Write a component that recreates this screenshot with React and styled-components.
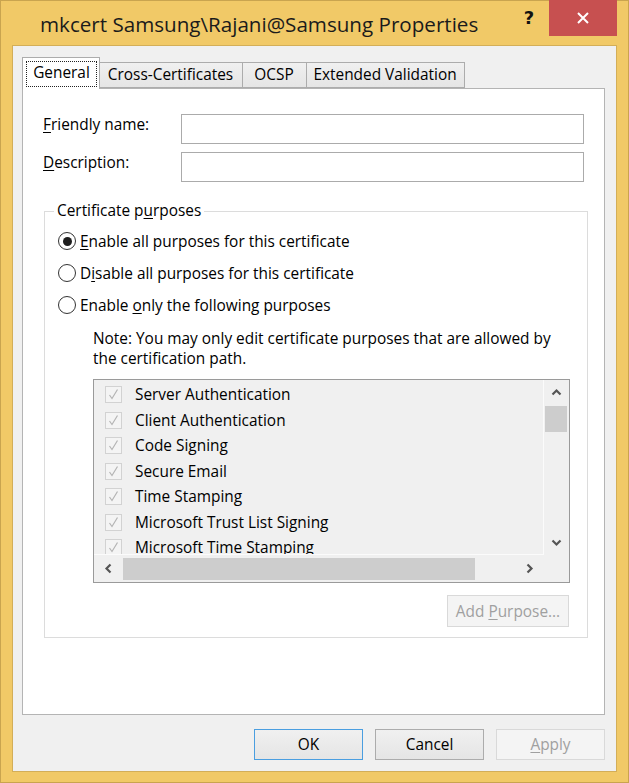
import React from "react";
import styled, { createGlobalStyle } from "styled-components";

const GlobalStyle = createGlobalStyle`
  html, body {
    margin: 0;
    padding: 0;
    background: #f1c967;
  }
  body {
    font-family: "Open Sans", "Noto Sans", sans-serif;
    font-size: 15.4px;
    color: #000;
  }
  * {
    box-sizing: border-box;
  }
`;

const Window = styled.div`
  width: 629px;
  height: 783px;
  display: flex;
  flex-direction: column;
  background: #f1c967;
  border: 1px solid #c9a44f;
`;

const TitleBar = styled.div`
  height: 44px;
  display: flex;
  align-items: flex-start;
`;

const Title = styled.div`
  flex: 1;
  padding: 9px 0 0 39px;
  font-size: 20.6px;
  line-height: 28px;
  color: #1b1b1b;
  white-space: nowrap;
`;

const HelpButton = styled.div`
  width: 32px;
  height: 32px;
  margin-right: 4px;
  display: flex;
  align-items: center;
  justify-content: center;
  font-family: "DejaVu Sans", sans-serif;
  font-weight: 700;
  font-size: 18px;
  color: #111;
`;

const CloseButton = styled.div`
  width: 68px;
  height: 36px;
  margin: -1px 11px 0 0;
  background: #c75050;
  display: flex;
  align-items: center;
  justify-content: center;
`;

const Client = styled.div`
  flex: 1;
  margin: 0 11px 10px 11px;
  background: #f0f0f0;
  border: 1px solid #d3ae58;
  display: flex;
  flex-direction: column;
  padding: 11px 11px 11px 9px;
`;

const TabStrip = styled.div`
  height: 31px;
  display: flex;
  align-items: flex-end;
`;

const Tab = styled.div`
  position: relative;
  width: ${(p) => p.$width}px;
  height: ${(p) => (p.$active ? "32px" : "26px")};
  margin-bottom: ${(p) => (p.$active ? "-1px" : "0")};
  margin-left: ${(p) => (p.$first ? "0" : "-1px")};
  z-index: ${(p) => (p.$active ? 1 : 0)};
  padding: ${(p) => (p.$active ? "3px 2px 0 3px" : "0 1px 0 0")};
  background: ${(p) => (p.$active ? "#fff" : "linear-gradient(#f0f0f0, #e5e5e5)")};
  border: 1px solid #acacac;
  border-bottom: ${(p) => (p.$active ? "none" : "1px solid #acacac")};
  display: flex;
  align-items: ${(p) => (p.$active ? "flex-start" : "center")};
  justify-content: center;
  white-space: nowrap;
  line-height: 22px;
`;

const FocusLabel = styled.span`
  flex: 1;
  text-align: center;
  padding-bottom: 2px;
  border: 1px dotted #222;
`;

const Panel = styled.div`
  flex: 1;
  background: #fff;
  border: 1px solid #b4b4b4;
  padding: 25px 16px 0 21px;
  display: flex;
  flex-direction: column;
`;

const FieldGrid = styled.div`
  display: grid;
  grid-template-columns: 138px 1fr;
  grid-auto-rows: 30px;
  row-gap: 8px;
  margin: 0 4px 0 -1px;
`;

const FieldLabel = styled.label`
  line-height: 22px;
  align-self: start;
`;

const TextBox = styled.div`
  border: 1px solid #ababab;
  background: #fff;
`;

const AccessKey = styled.u`
  text-decoration-thickness: 1px;
  text-underline-offset: 2px;
`;

const Group = styled.fieldset`
  margin: 19px 0 0 0;
  padding: 4px 17px 10px 12px;
  border: 1px solid #dcdcdc;
  min-width: 0;
  display: flex;
  flex-direction: column;
`;

const Legend = styled.legend`
  padding: 0 3px;
  margin-left: -3px;
  line-height: 20px;
`;

const RadioRow = styled.div`
  height: 32px;
  display: flex;
  align-items: center;
  gap: 4px;
`;

const RadioCircle = styled.span`
  width: 18px;
  height: 18px;
  margin-left: 1px;
  border-radius: 50%;
  border: 1px solid #333;
  background: #fff;
  display: flex;
  align-items: center;
  justify-content: center;
  &::after {
    content: "";
    width: 9px;
    height: 9px;
    border-radius: 50%;
    background: #1e1e1e;
    display: ${(p) => (p.$checked ? "block" : "none")};
  }
`;

const Note = styled.div`
  margin: 8px 0 0 36px;
  line-height: 20px;
`;

const ListFrame = styled.div`
  margin: 10px 0 0 36px;
  height: 204px;
  border: 1px solid #9a9a9a;
  background: #f0f0f0;
  display: grid;
  grid-template-columns: 1fr 25px;
  grid-template-rows: 1fr 27px;
`;

const ListItems = styled.div`
  overflow: hidden;
  padding: 2px 0 0 11px;
  border-right: 1px solid #fbfbfb;
  border-bottom: 1px solid #fbfbfb;
`;

const ListItem = styled.div`
  height: 25.5px;
  display: flex;
  align-items: center;
  gap: 13px;
  white-space: nowrap;
`;

const CheckBox = styled.span`
  width: 17px;
  height: 17px;
  flex: none;
  border: 1px solid #d2d2d2;
  background: #f4f4f4;
  display: flex;
  align-items: center;
  justify-content: center;
`;

const VScroll = styled.div`
  display: flex;
  flex-direction: column;
`;

const HScroll = styled.div`
  display: flex;
`;

const ScrollArrow = styled.div`
  flex: none;
  width: ${(p) => (p.$horizontal ? "29px" : "auto")};
  height: ${(p) => (p.$horizontal ? "auto" : "25px")};
  display: flex;
  align-items: center;
  justify-content: center;
`;

const Thumb = styled.div`
  background: #cdcdcd;
  margin: ${(p) => (p.$horizontal ? "3px 0 2px 0" : "1px 2px 0 1px")};
  width: ${(p) => (p.$horizontal ? "352px" : "auto")};
  height: ${(p) => (p.$horizontal ? "auto" : "26px")};
`;

const Spacer = styled.div`
  flex: 1;
`;

const Corner = styled.div`
  background: #f0f0f0;
`;

const Button = styled.div`
  width: ${(p) => p.$width || "109px"};
  height: ${(p) => p.$height || "31px"};
  display: flex;
  align-items: center;
  justify-content: center;
  border: 1px solid
    ${(p) => (p.$disabled ? "#d9d9d9" : p.$default ? "#4a9ee0" : "#acacac")};
  background: ${(p) =>
    p.$disabled ? "#f4f4f4" : "linear-gradient(#f0f0f0, #e5e5e5)"};
  color: ${(p) => (p.$disabled ? "#a0a0a0" : "#000")};
  white-space: nowrap;
`;

const AddButton = styled(Button)`
  align-self: flex-end;
  margin: 12px 1px 0 0;
`;

const ButtonRow = styled.div`
  margin-top: 14px;
  display: flex;
  justify-content: flex-end;
  gap: 12px;
`;

const rotations = { up: 0, right: 90, down: 180, left: 270 };

function Chevron({ dir }) {
  return (
    <svg
      width="11"
      height="11"
      viewBox="0 0 11 11"
      style={{ transform: `rotate(${rotations[dir]}deg)` }}
    >
      <path
        d="M1.5 7.5 L5.5 3.5 L9.5 7.5"
        fill="none"
        stroke="#555"
        strokeWidth="2.2"
      />
    </svg>
  );
}

const purposes = [
  "Server Authentication",
  "Client Authentication",
  "Code Signing",
  "Secure Email",
  "Time Stamping",
  "Microsoft Trust List Signing",
  "Microsoft Time Stamping",
];

const tabs = [
  { label: "General", width: 78 },
  { label: "Cross-Certificates", width: 144 },
  { label: "OCSP", width: 65 },
  { label: "Extended Validation", width: 159 },
];

export default function App() {
  return (
    <>
      <GlobalStyle />
      <Window>
        <TitleBar>
          <Title>mkcert Samsung\Rajani@Samsung Properties</Title>
          <HelpButton>?</HelpButton>
          <CloseButton>
            <svg width="14" height="14" viewBox="0 0 14 14">
              <path d="M2 2 L12 12 M12 2 L2 12" stroke="#fff" strokeWidth="2" />
            </svg>
          </CloseButton>
        </TitleBar>
        <Client>
          <TabStrip>
            {tabs.map((t, i) => (
              <Tab key={t.label} $width={t.width} $active={i === 0} $first={i === 0}>
                {i === 0 ? <FocusLabel>{t.label}</FocusLabel> : t.label}
              </Tab>
            ))}
          </TabStrip>
          <Panel>
            <FieldGrid>
              <FieldLabel>
                <AccessKey>F</AccessKey>riendly name:
              </FieldLabel>
              <TextBox />
              <FieldLabel>
                <AccessKey>D</AccessKey>escription:
              </FieldLabel>
              <TextBox />
            </FieldGrid>
            <Group>
              <Legend>
                Certificate p<AccessKey>u</AccessKey>rposes
              </Legend>
              <RadioRow>
                <RadioCircle $checked />
                <span>
                  <AccessKey>E</AccessKey>nable all purposes for this certificate
                </span>
              </RadioRow>
              <RadioRow>
                <RadioCircle />
                <span>
                  D<AccessKey>i</AccessKey>sable all purposes for this certificate
                </span>
              </RadioRow>
              <RadioRow>
                <RadioCircle />
                <span>
                  Enable <AccessKey>o</AccessKey>nly the following purposes
                </span>
              </RadioRow>
              <Note>
                Note: You may only edit certificate purposes that are allowed by
                <br />
                the certification path.
              </Note>
              <ListFrame>
                <ListItems>
                  {purposes.map((p) => (
                    <ListItem key={p}>
                      <CheckBox>
                        <svg width="13" height="13" viewBox="0 0 13 13">
                          <path
                            d="M2.5 7 L5 10.5 L10.5 1.5"
                            fill="none"
                            stroke="#b4b4b4"
                            strokeWidth="1.2"
                          />
                        </svg>
                      </CheckBox>
                      <span>{p}</span>
                    </ListItem>
                  ))}
                </ListItems>
                <VScroll>
                  <ScrollArrow>
                    <Chevron dir="up" />
                  </ScrollArrow>
                  <Thumb />
                  <Spacer />
                  <ScrollArrow>
                    <Chevron dir="down" />
                  </ScrollArrow>
                </VScroll>
                <HScroll>
                  <ScrollArrow $horizontal>
                    <Chevron dir="left" />
                  </ScrollArrow>
                  <Thumb $horizontal />
                  <Spacer />
                  <ScrollArrow $horizontal>
                    <Chevron dir="right" />
                  </ScrollArrow>
                </HScroll>
                <Corner />
              </ListFrame>
              <AddButton $disabled $width="122px" $height="32px">
                <span>
                  Add <AccessKey>P</AccessKey>urpose...
                </span>
              </AddButton>
            </Group>
          </Panel>
          <ButtonRow>
            <Button $default>OK</Button>
            <Button>Cancel</Button>
            <Button $disabled>
              <span>
                <AccessKey>A</AccessKey>pply
              </span>
            </Button>
          </ButtonRow>
        </Client>
      </Window>
    </>
  );
}
